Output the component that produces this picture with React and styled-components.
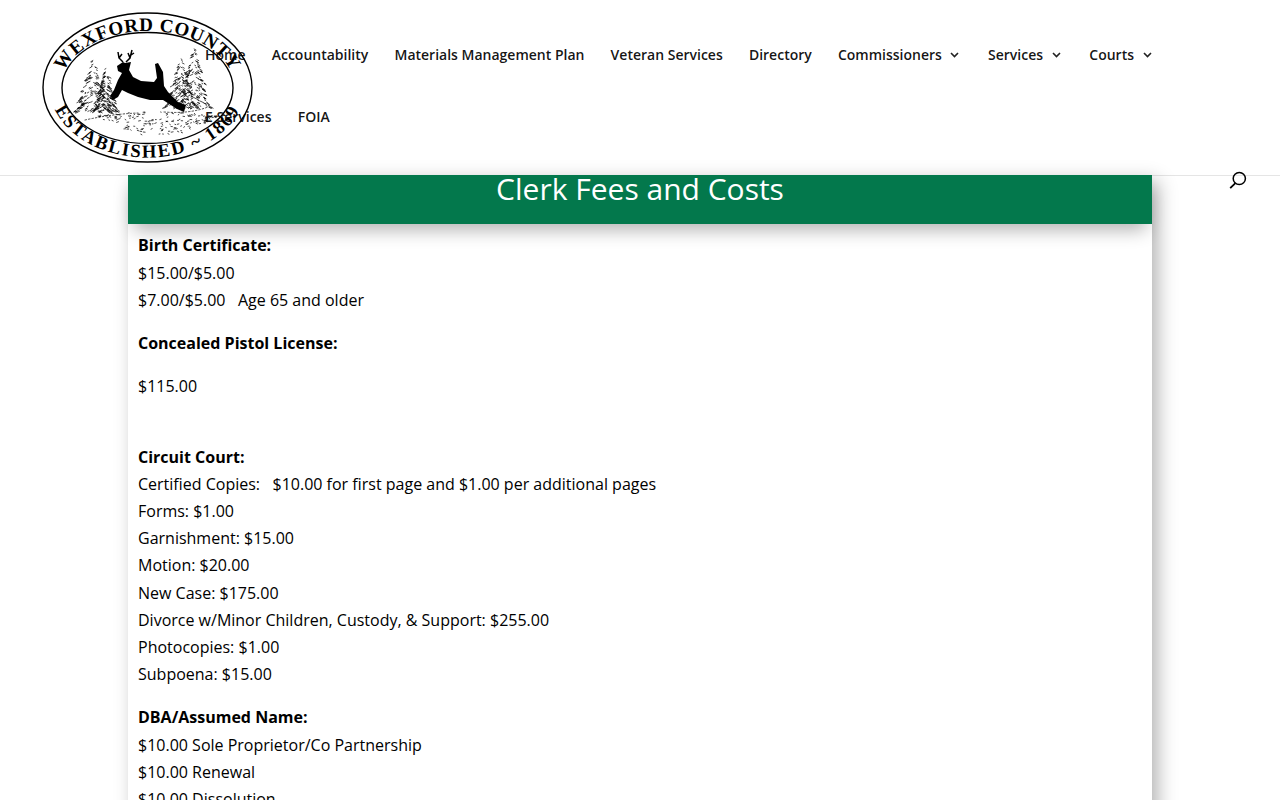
import React from 'react';
import styled, { createGlobalStyle } from 'styled-components';

const Global = createGlobalStyle`
  html, body { margin: 0; padding: 0; height: 800px; overflow: hidden; background: #fff; }
  body { font-family: "Open Sans", "Liberation Sans", sans-serif; color: #000; }
  #root { height: 800px; overflow: hidden; }
`;

const Page = styled.div`
  display: flex;
  flex-direction: column;
  height: 800px;
  overflow: hidden;
`;

const Header = styled.header`
  position: relative;
  order: 1;
  flex: none;
  height: 175px;
  box-sizing: border-box;
  padding: 23px 0 0 205px;
  background: #fff;
  box-shadow: 0 1px 0 rgba(0, 0, 0, 0.1);
`;

const LogoWrap = styled.a`
  position: absolute;
  left: 42px;
  top: 12px;
  width: 212px;
  height: 152px;
  display: block;
`;

const Nav = styled.nav`
  position: relative;
  display: flex;
  flex-wrap: wrap;
  width: 985px;
  column-gap: 26.2px;
`;

const NavItem = styled.a`
  display: flex;
  align-items: center;
  gap: 8.5px;
  height: 62px;
  font-size: 14px;
  font-weight: 600;
  color: rgba(0, 0, 0, 0.92);
  white-space: nowrap;
`;

const Chevron = styled.svg`
  width: 9px;
  height: 6px;
  margin: 2px 2.5px 0 0;
  display: block;
`;

const SearchButton = styled.svg`
  position: absolute;
  left: 1228px;
  top: 170px;
  width: 20px;
  height: 20px;
`;

const Main = styled.main`
  order: 2;
  flex: 1;
  width: 1024px;
  margin: 0 auto;
  background: #fff;
  box-shadow: 6px 6px 18px 0 rgba(0, 0, 0, 0.3);
  position: relative;
`;

const TitleBar = styled.h1`
  margin: 0;
  height: 49px;
  box-sizing: border-box;
  background: #03784c;
  color: #fff;
  text-align: center;
  font-size: 30px;
  font-weight: 400;
  line-height: 28px;
  box-shadow: 0 12px 18px -6px rgba(0, 0, 0, 0.3);
`;

const Body = styled.div`
  padding: 8.3px 10px 0;
  font-size: 16px;
  line-height: 27.2px;
`;

const Para = styled.p`
  margin: 0 0 16px;
`;

const Line = styled.span`
  display: block;
`;

const Strong = styled.strong`
  display: block;
  font-weight: 700;
`;

function rng(seed) {
  let s = seed;
  return () => {
    s = (s * 16807) % 2147483647;
    return (s - 1) / 2147483646;
  };
}

function treePath(apexX, apexY, baseY, halfW, seed) {
  const r = rng(seed);
  let d = '';
  const h = baseY - apexY;
  const tiers = 5;
  for (let i = 0; i < 190; i++) {
    const t = Math.sqrt(r());
    const y = apexY + t * h;
    const tier = (t * tiers) % 1;
    const w = halfW * t * (0.6 + 0.4 * tier);
    const side = r() < 0.5 ? -1 : 1;
    const edge = r() < 0.5 ? 0.75 + r() * 0.25 : r() * 0.75;
    const x = apexX + side * w * edge;
    const len = 0.6 + r() * 1.8;
    d += `M${x.toFixed(1)} ${y.toFixed(1)}l${(side * len).toFixed(1)} ${(len * 0.55).toFixed(1)}`;
  }
  return d;
}

function groundPath(seed) {
  const r = rng(seed);
  let d = '';
  for (let i = 0; i < 170; i++) {
    const x = 98 + r() * 118;
    const c = (x - 157) / 60;
    const lo = 112 + 4 * c * c;
    const band = 24 * (1 - c * c);
    const y = lo + r() * band;
    const len = 0.5 + r() * 1.4;
    d += `M${x.toFixed(1)} ${y.toFixed(1)}l${len.toFixed(1)} ${(r() * 1.4 - 0.7).toFixed(1)}`;
  }
  return d;
}

const Logo = () => (
  <svg viewBox="42 12 212 152" width="212" height="152">
    <defs>
      <path id="logoTop" d="M60.5 87.5 A87 56.5 0 0 1 234.5 87.5" />
      <path id="logoBottom" d="M50 87.5 A97.5 70 0 0 0 245 87.5" />
    </defs>
    <ellipse cx="147.5" cy="87.5" rx="104.5" ry="74.5" fill="none" stroke="#000" strokeWidth="1.4" />
    <ellipse cx="147.5" cy="88" rx="85.5" ry="55.5" fill="none" stroke="#000" strokeWidth="1.4" />
    <text fontFamily="'Liberation Serif', serif" fontWeight="700" fontSize="19" fill="#000" letterSpacing="0.6">
      <textPath href="#logoTop" startOffset="50%" textAnchor="middle">WEXFORD COUNTY</textPath>
    </text>
    <text fontFamily="'Liberation Serif', serif" fontWeight="700" fontSize="18.5" fill="#000" letterSpacing="1.9">
      <textPath href="#logoBottom" startOffset="50%" textAnchor="middle">ESTABLISHED ~ 1869</textPath>
    </text>
    <g stroke="#000" strokeWidth="0.7" fill="none" strokeLinecap="round">
      <path d={treePath(93, 60, 113, 20, 11)} />
      <path d={treePath(106, 68, 112, 14, 23)} />
      <path d={treePath(194, 48, 108, 19, 37)} />
      <path d={treePath(181, 58, 108, 18, 51)} />
      <path d={groundPath(71)} />
      <path d="M85 120 Q112 114 138 113 M164 112 Q190 114 208 107" strokeDasharray="1.5 2" />
    </g>
    <path
      fill="#000"
      d="M117 66 L123 62 L125 63 L131 62 L129 70 L133 77 L141 81 L154 82 L157 78 L155 64 L158 63 L163 72 L164 86 L168 92 L178 102 L186 105 L184 112 L177 109 L163 100 L150 100 L138 97 L128 93 L122 90 L118 97 L113 100 L110 96 L114 90 L118 80 L122 73 L118 71 Z"
    />
    <path
      stroke="#000"
      strokeWidth="1.5"
      fill="none"
      d="M123 62 L119 58 L118 52 M119 58 L122 54 M126 62 L130 58 L132 50 M130 58 L128 53 M131 55 L134 53"
    />
  </svg>
);

const ChevronIcon = () => (
  <Chevron viewBox="0 0 9 6">
    <path d="M1 1 L4.5 4.5 L8 1" fill="none" stroke="#222" strokeWidth="1.6" />
  </Chevron>
);

const links = [
  ['Home'],
  ['Accountability'],
  ['Materials Management Plan'],
  ['Veteran Services'],
  ['Directory'],
  ['Commissioners', true],
  ['Services', true],
  ['Courts', true],
  ['E Services'],
  ['FOIA'],
];

const sections = [
  { bold: 'Birth Certificate:', lines: ['$15.00/$5.00', '$7.00/$5.00\u00a0\u00a0 Age 65 and older'] },
  { bold: 'Concealed Pistol License:', lines: [] },
  { lines: ['$115.00', '\u00a0'] },
  {
    bold: 'Circuit Court:',
    lines: [
      'Certified Copies:\u00a0\u00a0 $10.00 for first page and $1.00 per additional pages',
      'Forms: $1.00',
      'Garnishment: $15.00',
      'Motion: $20.00',
      'New Case: $175.00',
      'Divorce w/Minor Children, Custody, & Support: $255.00',
      'Photocopies: $1.00',
      'Subpoena: $15.00',
    ],
  },
  {
    bold: 'DBA/Assumed Name:',
    lines: ['$10.00 Sole Proprietor/Co Partnership', '$10.00 Renewal', '$10.00 Dissolution'],
  },
];

export default function App() {
  return (
    <Page>
      <Global />
      <Main>
        <TitleBar>Clerk Fees and Costs</TitleBar>
        <Body>
          {sections.map((s, i) => (
            <Para key={i}>
              {s.bold && <Strong>{s.bold}</Strong>}
              {s.lines.map((l, j) => (
                <Line key={j}>{l}</Line>
              ))}
            </Para>
          ))}
        </Body>
      </Main>
      <Header>
        <LogoWrap>
          <Logo />
        </LogoWrap>
        <Nav>
          {links.map(([label, more]) => (
            <NavItem key={label}>
              {label}
              {more && <ChevronIcon />}
            </NavItem>
          ))}
        </Nav>
        <SearchButton viewBox="0 0 20 20">
          <circle cx="11.3" cy="8.5" r="6.1" fill="none" stroke="#000" strokeWidth="1.5" />
          <path d="M7.4 13.2 L2.2 18.2" stroke="#000" strokeWidth="1.8" fill="none" />
        </SearchButton>
      </Header>
    </Page>
  );
}
